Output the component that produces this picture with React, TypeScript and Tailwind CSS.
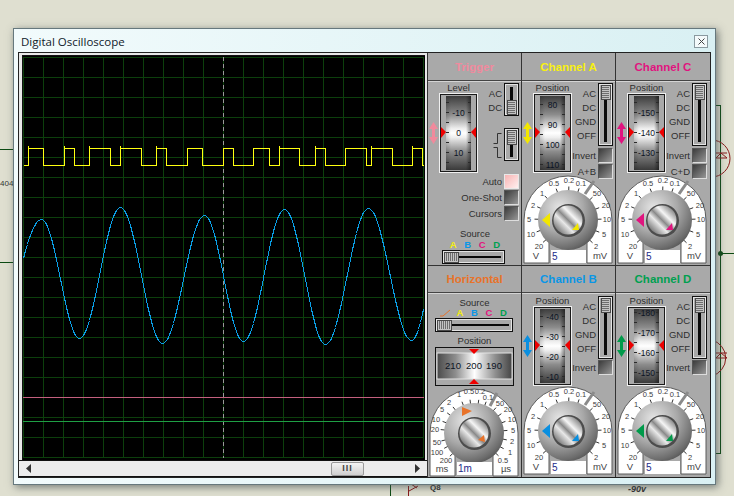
import { ReactNode } from "react";

// rising / falling edges of the digital trace, in page pixels
const edges = [28, 43, 64, 74, 89, 110, 120, 141, 156, 166, 187, 202, 223, 233, 253, 269, 279, 299, 315, 325, 345, 366, 371, 392, 412, 422];
const spikes = [28, 64, 89, 120, 156, 279, 315, 371, 412];

function squarePath() {
  let d = "M23.5 165.5";
  edges.forEach((x, i) => {
    const y = i % 2 === 0 ? 148.5 : 165.5;
    d += ` H${x + 0.5} V${y}`;
  });
  return d + " H424";
}

const extrema = [
  [-6, 340], [41, 219], [79, 338], [120, 207], [162, 343], [204, 215], [243, 341],
  [284, 209], [325, 344], [368, 208], [411, 340], [448, 208],
];

function sinePoints() {
  const pts: string[] = [];
  for (let x = 23; x <= 423; x++) {
    const i = extrema.findIndex((e, n) => n < extrema.length - 1 && x >= e[0] && x < extrema[n + 1][0]);
    const [x0, y0] = extrema[i];
    const [x1, y1] = extrema[i + 1];
    const t = (x - x0) / (x1 - x0);
    const y = y0 + ((y1 - y0) * (1 - Math.cos(Math.PI * t))) / 2;
    pts.push(`${x + 0.5},${Math.round(y) + 0.5}`);
  }
  return pts.join(" ");
}

function Screen() {
  const vs = Array.from({ length: 21 }, (_, i) => 23 + i * 20);
  const hs = Array.from({ length: 21 }, (_, i) => 57 + i * 20);
  return (
    <svg width="402" height="404" viewBox="23 56 402 404" className="block bg-black" shapeRendering="crispEdges">
      {vs.map((x) => (
        <line key={x} x1={x + 0.5} x2={x + 0.5} y1="57" y2="458" stroke="#0c3f0c" />
      ))}
      {hs.map((y) => (
        <line key={y} x1="23" x2="424" y1={y + 0.5} y2={y + 0.5} stroke="#0c3f0c" />
      ))}
      <line x1="223.5" x2="223.5" y1="57" y2="458" stroke="#9a9a9a" strokeDasharray="4 3" />
      <line x1="23" x2="424" y1="397.5" y2="397.5" stroke="#c4607e" />
      <line x1="23" x2="424" y1="421.5" y2="421.5" stroke="#1f9f45" />
      <polyline points={sinePoints()} fill="none" stroke="#0a9fe6" />
      <path d={squarePath()} fill="none" stroke="#ffff10" />
      {spikes.map((x) => (
        <line key={x} x1={x + 0.5} x2={x + 0.5} y1="146" y2="149" stroke="#ffff10" />
      ))}
    </svg>
  );
}

function Drum({ marks }: { marks: [string, number][] }) {
  return (
    <svg width="39" height="80" viewBox="0 0 39 80" className="block shrink-0">
      <defs>
        <linearGradient id="drumV" x1="0" x2="0" y1="0" y2="1">
          <stop offset="0" stopColor="#3e3e3e" />
          <stop offset="0.25" stopColor="#8c8c8c" />
          <stop offset="0.44" stopColor="#eeeeee" />
          <stop offset="0.5" stopColor="#ffffff" />
          <stop offset="0.56" stopColor="#eeeeee" />
          <stop offset="0.75" stopColor="#8c8c8c" />
          <stop offset="1" stopColor="#3a3a3a" />
        </linearGradient>
        <linearGradient id="drumH" x1="0" x2="1" y1="0" y2="0">
          <stop offset="0" stopColor="#000" stopOpacity="0.15" />
          <stop offset="0.2" stopColor="#000" stopOpacity="0" />
          <stop offset="0.8" stopColor="#000" stopOpacity="0" />
          <stop offset="1" stopColor="#000" stopOpacity="0.45" />
        </linearGradient>
      </defs>
      <rect x="0.5" y="0.5" width="38" height="79" fill="none" stroke="#f0f0f0" />
      <rect x="1.5" y="1.5" width="36" height="77" fill="#a9a9a9" stroke="#1a1a1a" />
      <rect x="7" y="3" width="25" height="74" fill="url(#drumV)" />
      <rect x="7" y="3" width="25" height="74" fill="url(#drumH)" />
      {Array.from({ length: 8 }, (_, i) => marks[0][1] % 20 + i * 10 - 10)
        .filter((y) => y > 3 && y < 77)
        .map((y) => (
          <g key={y} stroke="#2a2a2a">
            <line x1="7" x2="10" y1={y + 0.5} y2={y + 0.5} />
            <line x1="29" x2="32" y1={y + 0.5} y2={y + 0.5} />
          </g>
        ))}
      {marks.map(([t, y]) => (
        <text key={t} x="19.5" y={y + 3.5} textAnchor="middle" fontSize="8.5" fill="#0c1424">
          {t}
        </text>
      ))}
      <polygon points="2,34 7,39 2,45" fill="#ee0000" />
      <polygon points="37,34 32,39 37,45" fill="#ee0000" />
    </svg>
  );
}

function DoubleArrow({ color }: { color: string }) {
  return (
    <svg width="9" height="22" viewBox="0 0 9 22" className="block shrink-0">
      <path d="M4.5 0 L9 7 H6 V15 H9 L4.5 22 L0 15 H3 V7 H0 Z" fill={color} />
    </svg>
  );
}

function Grip({ x, y, w, h, vertical }: { x: number; y: number; w: number; h: number; vertical: boolean }) {
  const n = vertical ? Math.floor(h / 2) : Math.floor(w / 2);
  return (
    <g>
      <rect x={x} y={y} width={w} height={h} fill="#c4c4c4" stroke="#4a4a4a" />
      {Array.from({ length: n - 1 }, (_, i) =>
        vertical ? (
          <line key={i} x1={x + 1} x2={x + w - 1} y1={y + 2 + i * 2 + 0.5} y2={y + 2 + i * 2 + 0.5} stroke="#6e6e6e" />
        ) : (
          <line key={i} x1={x + 2 + i * 2 + 0.5} x2={x + 2 + i * 2 + 0.5} y1={y + 1} y2={y + h - 1} stroke="#6e6e6e" />
        )
      )}
    </g>
  );
}

function VSlider({ h, thumbTop }: { h: number; thumbTop: boolean }) {
  return (
    <svg width="15" height={h} viewBox={`0 0 15 ${h}`} className="block shrink-0" shapeRendering="crispEdges">
      <rect x="0.5" y="0.5" width="14" height={h - 1} fill="#a9a9a9" stroke="#111" />
      <rect x="1.5" y="1.5" width="12" height={h - 3} fill="none" stroke="#e4e4e4" />
      <rect x="6" y="4" width="3" height={h - 8} fill="#0a0a0a" />
      <Grip x={3} y={thumbTop ? 2 : h - 16} w={9} h={14} vertical />
    </svg>
  );
}

function HSlider({ w, thumb }: { w: number; thumb: number }) {
  return (
    <svg width={w} height="14" viewBox={`0 0 ${w} 14`} className="block" shapeRendering="crispEdges">
      <rect x="0.5" y="0.5" width={w - 1} height="13" fill="#a9a9a9" stroke="#111" />
      <rect x="1.5" y="1.5" width={w - 3} height="11" fill="none" stroke="#e4e4e4" />
      <rect x="4" y="6" width={w - 8} height="2" fill="#0a0a0a" />
      <Grip x={thumb} y={2} w={14} h={10} vertical={false} />
    </svg>
  );
}

function Btn({ on }: { on?: boolean }) {
  return on ? (
    <div className="h-[15px] w-[15px] shrink-0 border border-[#e8e8e8] bg-linear-to-br from-[#f7b4b4] to-[#fff0f0]" />
  ) : (
    <div className="h-[15px] w-[15px] shrink-0 border border-t-[#555] border-r-[#ddd] border-b-[#ddd] border-l-[#555] bg-linear-to-br from-[#3c3c3c] to-[#989898]" />
  );
}

function BtnRow({ label, on }: { label: string; on?: boolean }) {
  return (
    <div className="flex items-center justify-end gap-[2px] text-[9.5px] leading-none whitespace-nowrap text-[#2e2e2e]">
      {label}
      <Btn on={on} />
    </div>
  );
}

type Tick = [string, number, number];

const channelTicks: Tick[] = [
  ["0.5", -14, -37], ["0.2", 1, -40], ["0.1", 13, -37], ["1", -26, -27], ["2", -35, -15], ["5", -39, -1],
  ["10", -37, 14], ["20", -29, 26], ["50", 29, -27], ["20", 38, -15], ["10", 39, -1], ["5", 36, 14], ["2", 28, 26],
];

const timeTicks: Tick[] = [
  ["0.5", -5, -42], ["0.2", 6, -42], ["0.1", 14, -36], ["1", -15, -39], ["2", -25, -31], ["5", -32, -24],
  ["10", -38, -14], ["20", -39, -4], ["50", -37, 9], ["100", -37, 19], ["200", -28, 27], ["50", 26, -30],
  ["20", 34, -24], ["10", 38, -14], ["5", 39, -3], ["2", 38, 8], ["1", 36, 19], ["0.5", 29, 27],
];

function Knob({ color, value, horizontal }: { color: string; value: string; horizontal?: boolean }) {
  const ticks = horizontal ? timeTicks : channelTicks;
  const big = horizontal ? "-12,-26 -2,-22 -12,-17" : "-26,0 -18,-7 -18,7";
  const small = horizontal ? "4,7 10,2 11,9" : "4,10 10,3 11,10";
  const notch = horizontal ? "M23 -40 L16 -27" : "M26 -39 L17 -26";
  return (
    <div className={horizontal ? "relative h-[88px] w-[92px]" : "relative h-[89px] w-[92px]"}>
      <svg width="92" height="89" viewBox="-46 -45 92 89" className="block overflow-visible">
        <defs>
          <radialGradient id="knobBody" cx="0.36" cy="0.3" r="0.8">
            <stop offset="0" stopColor="#e6e6e6" />
            <stop offset="0.5" stopColor="#a8a8a8" />
            <stop offset="0.85" stopColor="#6c6c6c" />
            <stop offset="1" stopColor="#4a4a4a" />
          </radialGradient>
          <linearGradient id="knobCap" x1="0.1" y1="0.9" x2="0.9" y2="0.1">
            <stop offset="0" stopColor="#6a6a6a" />
            <stop offset="0.35" stopColor="#e8e8e8" />
            <stop offset="0.5" stopColor="#8a8a8a" />
            <stop offset="0.68" stopColor="#f6f6f6" />
            <stop offset="1" stopColor="#777777" />
          </linearGradient>
        </defs>
        <path
          d="M-44 43 V0 A44 44 0 0 1 44 0 V43 H19 V20 H-19 V43 Z"
          fill="#ffffff"
          stroke="#5a5a5a"
        />
        <path d={notch} stroke="#8a8a8a" strokeWidth="3" />
        {ticks.map(([t, x, y], i) => {
          const len = Math.hypot(x, y);
          return (
            <g key={i}>
              <line
                x1={(x / len) * 29}
                y1={(y / len) * 29}
                x2={(x / len) * 33.5}
                y2={(y / len) * 33.5}
                stroke="#333"
              />
              <text x={x} y={y + 3} textAnchor="middle" fontSize="7.5" fill="#3c3c3c">
                {t}
              </text>
            </g>
          );
        })}
        <text x="-32" y="39" textAnchor="middle" fontSize="9.5" fill="#444">
          {horizontal ? "ms" : "V"}
        </text>
        <text x="32" y="39" textAnchor="middle" fontSize="9.5" fill="#444">
          {horizontal ? "µs" : "mV"}
        </text>
        <circle r="30" fill="url(#knobBody)" />
        <circle r="16.5" cx="0.5" cy="0.5" fill="#4c4c4c" />
        <circle r="14.5" fill="url(#knobCap)" />
        <polygon points={big} fill={color} />
        <polygon points={small} fill={color} />
      </svg>
      <div
        className={
          horizontal
            ? "absolute top-[74px] left-[29px] flex h-[13px] w-[35px] items-center bg-white pl-[1px] text-[10px] leading-none text-[#1c2a8a]"
            : "absolute top-[75px] left-[29px] flex h-[13px] w-[35px] items-center bg-white pl-[1px] text-[10px] leading-none text-[#1c2a8a]"
        }
      >
        {value}
      </div>
    </div>
  );
}

function Panel({ title, titleClass, topRow, children }: { title: string; titleClass: string; topRow: boolean; children: ReactNode }) {
  return (
    <div className={topRow ? "h-[212px] border-l border-[#333] bg-[#a9a9a9]" : "h-[212px] border-t border-l border-[#333] bg-[#a9a9a9]"}>
      <div
        className={
          topRow
            ? "flex h-[28px] items-center justify-center border-b border-[#444] pt-[2px] text-[11.5px] font-bold " + titleClass
            : "flex h-[27px] items-center justify-center border-b border-[#444] pt-[2px] text-[11.5px] font-bold " + titleClass
        }
      >
        {title}
      </div>
      <div className="shadow-[inset_0_1px_0_#d4d4d4]">{children}</div>
    </div>
  );
}

function Channel({
  top,
  color,
  marks,
  extra,
  value,
}: {
  top: boolean;
  color: string;
  marks: [string, number][];
  extra?: string;
  value: string;
}) {
  return (
    <>
      <div className={top ? "flex h-[94px]" : "flex h-[93px]"}>
        <div className="flex flex-col pl-[1px]">
          <div className={top ? "mt-[1px] h-[11px] pl-[10px] text-center text-[9.5px] leading-[11px] text-[#2e2e2e]" : "mt-[2px] h-[11px] pl-[10px] text-center text-[9.5px] leading-[11px] text-[#2e2e2e]"}>
            Position
          </div>
          <div className="flex items-center gap-[1px]">
            <DoubleArrow color={color} />
            <Drum marks={marks} />
          </div>
        </div>
        <div className="flex flex-col">
          <div className={top ? "mt-[2px] flex gap-[2px]" : "mt-[3px] flex gap-[2px]"}>
            <div className="flex w-[24px] flex-col pt-[4px] text-right text-[9.5px] leading-[14px] text-[#2e2e2e]">
              <span>AC</span>
              <span>DC</span>
              <span>GND</span>
              <span>OFF</span>
            </div>
            <VSlider h={63} thumbTop />
          </div>
          <div className={top ? "mt-[2px] flex flex-col gap-[1px]" : "mt-[1px] flex flex-col gap-[1px]"}>
            <BtnRow label="Invert" />
            {extra && <BtnRow label={extra} />}
          </div>
        </div>
      </div>
      <Knob color={color} value={value} />
    </>
  );
}

function TriggerBody() {
  return (
    <>
      <div className="flex h-[93px]">
        <div className="flex flex-col pl-[1px]">
          <div className="mt-[1px] h-[11px] pl-[10px] text-center text-[9.5px] leading-[11px] text-[#2e2e2e]">Level</div>
          <div className="flex items-center gap-[1px]">
            <DoubleArrow color="#f08a9c" />
            <Drum marks={[["-10", 19], ["0", 39], ["10", 59]]} />
          </div>
        </div>
        <div className="flex flex-col items-end pl-[4px]">
          <div className="mt-[2px] flex gap-[2px]">
            <div className="flex w-[20px] flex-col pt-[4px] text-right text-[9.5px] leading-[14px] text-[#2e2e2e]">
              <span>AC</span>
              <span>DC</span>
            </div>
            <VSlider h={33} thumbTop={false} />
          </div>
          <div className="mt-[12px] flex items-center gap-[2px]">
            <svg width="9" height="26" viewBox="0 0 9 26" className="block">
              <path d="M0.5 11.5 H4.5 V1.5 H8.5 M0.5 15.5 H4.5 V25.5 H8.5" fill="none" stroke="#333" />
            </svg>
            <VSlider h={33} thumbTop />
          </div>
        </div>
      </div>
      <div className="flex flex-col gap-[1px] pr-[2px]">
        <BtnRow label="Auto" on />
        <BtnRow label="One-Shot" />
        <BtnRow label="Cursors" />
      </div>
      <div className="mt-[7px] h-[11px] pl-[1px] text-center text-[9.5px] leading-[11px] text-[#2e2e2e]">Source</div>
      <div className="mt-[1px] flex h-[9px] items-center pl-[18px] text-[9.5px] leading-none font-bold">
        <span className="w-[14.5px] text-center text-[#f5ee10]">A</span>
        <span className="w-[14.5px] text-center text-[#0a96e6]">B</span>
        <span className="w-[14.5px] text-center text-[#e0157f]">C</span>
        <span className="w-[14.5px] text-center text-[#00a050]">D</span>
      </div>
      <div className="mt-[1px] pl-[14px]">
        <HSlider w={63} thumb={2} />
      </div>
    </>
  );
}

function HorizontalBody() {
  return (
    <>
      <div className="h-[4px]" />
      <div className="h-[11px] text-center text-[9.5px] leading-[11px] text-[#2e2e2e]">Source</div>
      <div className="flex h-[9px] items-center justify-center text-[9.5px] leading-none font-bold">
        <svg width="14.5" height="9" viewBox="0 0 14.5 9" className="block">
          <path d="M2 8 H5 L12 2" fill="none" stroke="#e8732a" />
        </svg>
        <span className="w-[14.5px] text-center text-[#f5ee10]">A</span>
        <span className="w-[14.5px] text-center text-[#0a96e6]">B</span>
        <span className="w-[14.5px] text-center text-[#e0157f]">C</span>
        <span className="w-[14.5px] text-center text-[#00a050]">D</span>
      </div>
      <div className="mt-[1px] pl-[7px]">
        <HSlider w={78} thumb={2} />
      </div>
      <div className="mt-[3px] h-[11px] text-center text-[9.5px] leading-[11px] text-[#2e2e2e]">Position</div>
      <div className="mt-[1px] pl-[7px]">
        <svg width="79" height="39" viewBox="0 0 79 39" className="block">
          <defs>
            <linearGradient id="drumWide" x1="0" x2="1" y1="0" y2="0">
              <stop offset="0" stopColor="#4a4a4a" />
              <stop offset="0.25" stopColor="#8e8e8e" />
              <stop offset="0.5" stopColor="#ffffff" />
              <stop offset="0.78" stopColor="#8e8e8e" />
              <stop offset="1" stopColor="#444444" />
            </linearGradient>
          </defs>
          <rect x="0.5" y="0.5" width="78" height="38" fill="#a9a9a9" stroke="#111" />
          <rect x="2" y="6" width="75" height="26" fill="url(#drumWide)" stroke="#e4e4e4" strokeWidth="1" />
          <polygon points="34,2 44,2 39,7" fill="#ee0000" />
          <polygon points="34,37 44,37 39,32" fill="#ee0000" />
          <text x="18" y="22" textAnchor="middle" fontSize="9.5" fill="#0c1424">210</text>
          <text x="39" y="22" textAnchor="middle" fontSize="9.5" fill="#0c1424">200</text>
          <text x="59" y="22" textAnchor="middle" fontSize="9.5" fill="#0c1424">190</text>
        </svg>
      </div>
      <div className="mt-[2px]">
        <Knob color="#e8732a" value="1m" horizontal />
      </div>
    </>
  );
}

export default function App() {
  return (
    <div className="relative h-[496px] w-[734px] overflow-hidden bg-[#dfdfd0] font-['Liberation_Sans',Arial,sans-serif]">
      {/* schematic behind the window */}
      <svg width="734" height="496" viewBox="0 0 734 496" className="absolute inset-0">
        <g stroke="#0b4a12" fill="none" shapeRendering="crispEdges">
          <path d="M0 149.5 H14 M0 262.5 H14" />
          <path d="M716 105.5 H720.5 V453.5 H716 M720 253.5 H734" />
          <path d="M390.5 484 V496" />
        </g>
        <circle cx="720.5" cy="253.5" r="2.5" fill="#0b4a12" />
        <g stroke="#8a1a1a" fill="none">
          <path d="M711.5 140 A18.5 18.5 0 0 1 711.5 177" />
          <path d="M711.5 340 A18.5 18.5 0 0 1 711.5 376" />
          <path d="M716 158 H727 L721 153 L716 158 M716 153 H727" />
          <path d="M716 358 H727 L721 353 L716 358 M716 353 H727" />
          <path d="M408.5 486 V496 M409 491 L418 486 M411 484 L417 488" />
        </g>
        <text x="0" y="186" fontSize="8" fill="#333">404</text>
        <text x="430" y="490" fontSize="8" fontWeight="bold" fill="#333">Q8</text>
        <text x="628" y="492" fontSize="9" fontWeight="bold" fontStyle="italic" fill="#333">-90v</text>
      </svg>

      {/* simulator window */}
      <div className="relative mt-[28px] ml-[13px] h-[457px] w-[703px] border border-[#66787d] bg-linear-to-r from-[#f2fbfc] to-[#d9f0f3] pt-[23px] pr-[4px] pl-[4px] shadow-[2px_2px_8px_rgba(70,80,80,0.7)]">
        <div className="absolute top-0 left-0 flex h-[23px] w-full items-center pt-[2px] pl-[7px] font-['Open_Sans',sans-serif] text-[11.5px] text-[#10202a]">
          Digital Oscilloscope
        </div>
        <div className="absolute top-[6px] right-[7px] flex h-[13px] w-[14px] items-center justify-center border border-[#8a9aa0] bg-[#f4fafb]">
          <svg width="7" height="7" viewBox="0 0 7 7">
            <path d="M0.5 0.5 L6.5 6.5 M6.5 0.5 L0.5 6.5" stroke="#444" fill="none" />
          </svg>
        </div>

        <div className="flex h-[426px] border border-[#222] bg-[#e8e8e8]">
          <div className="flex w-[408px] shrink-0 flex-col">
            <div className="mt-[2px] ml-[3px] w-[403px] border-t border-l border-[#111]">
              <Screen />
            </div>
            <div className="flex h-[17px] items-center justify-between border-t border-b border-[#111] bg-[#ececec] pr-[7px] pl-[7px]">
              <svg width="6" height="9" viewBox="0 0 6 9" className="block">
                <polygon points="5,0 0,4.5 5,9" fill="#333" />
              </svg>
              <div className="mr-[50px] ml-auto flex h-[14px] w-[33px] items-center justify-center rounded-[2px] border border-[#9a9a9a] bg-linear-to-b from-[#f4f4f4] to-[#cfcfcf] text-[9px] leading-none font-bold tracking-[1px] text-[#444]">
                III
              </div>
              <svg width="6" height="9" viewBox="0 0 6 9" className="block">
                <polygon points="1,0 6,4.5 1,9" fill="#333" />
              </svg>
            </div>
          </div>
          <div className="grid h-[424px] shrink-0 grid-cols-[94px_94px_95px] grid-rows-[212px_212px]">
            <Panel title="Trigger" titleClass="text-[#f08a9e]" topRow>
              <TriggerBody />
            </Panel>
            <Panel title="Channel A" titleClass="text-[#f8f010]" topRow>
              <Channel
                top
                color="#f2e600"
                value="5"
                extra="A+B"
                marks={[["80", 11], ["90", 31], ["100", 51], ["110", 71]]}
              />
            </Panel>
            <Panel title="Channel C" titleClass="text-[#e0157f]" topRow>
              <Channel
                top
                color="#e0157f"
                value="5"
                extra="C+D"
                marks={[["-150", 19], ["-140", 39], ["-130", 59]]}
              />
            </Panel>
            <Panel title="Horizontal" titleClass="text-[#e8732a]" topRow={false}>
              <HorizontalBody />
            </Panel>
            <Panel title="Channel B" titleClass="text-[#0a96e6]" topRow={false}>
              <Channel
                top={false}
                color="#0a8fe0"
                value="5"
                marks={[["-40", 10], ["-30", 30], ["-20", 50], ["-10", 70]]}
              />
            </Panel>
            <Panel title="Channel D" titleClass="text-[#00a050]" topRow={false}>
              <Channel
                top={false}
                color="#009a4a"
                value="5"
                marks={[["-180", 6], ["-170", 26], ["-160", 46], ["-150", 66]]}
              />
            </Panel>
          </div>
        </div>
      </div>
    </div>
  );
}
